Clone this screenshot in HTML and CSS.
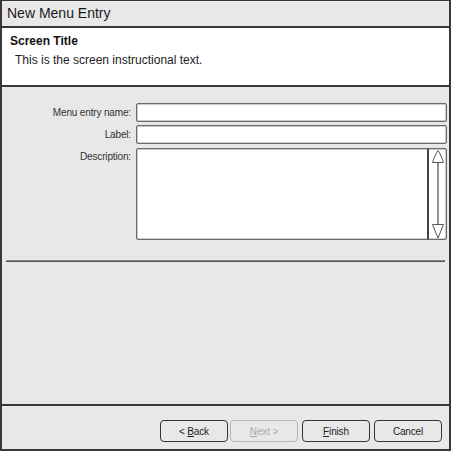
FILE: index.html
```html
<!DOCTYPE html>
<html>
<head>
<meta charset="utf-8">
<link rel="stylesheet" href="styles.css">
</head>
<body>
<div class="window">
  <div class="titlebar">New Menu Entry</div>
  <div class="header">
    <div class="screen-title">Screen Title</div>
    <div class="screen-text">This is the screen instructional text.</div>
  </div>
  <div class="content">
    <div class="form">
      <label class="lbl">Menu entry name:</label>
      <div class="field"></div>
      <label class="lbl">Label:</label>
      <div class="field"></div>
      <label class="lbl">Description:</label>
      <div class="field area">
        <div class="scroll">
          <svg width="16" height="90" viewBox="0 0 16 90">
            <path d="M8 1.5 C6 4 4 9 2.5 13.5 L13.5 13.5 C12 9 10 4 8 1.5 Z" fill="none" stroke="#555" stroke-width="1"/>
            <line x1="8" y1="13.5" x2="8" y2="75.5" stroke="#555" stroke-width="1.3"/>
            <path d="M2.5 75.5 L13.5 75.5 L8 89 Z" fill="none" stroke="#555" stroke-width="1"/>
          </svg>
        </div>
      </div>
    </div>
    <div class="separator"></div>
  </div>
  <div class="footer">
    <button class="btn"><span>&lt; <u>B</u>ack</span></button>
    <button class="btn disabled"><span><u>N</u>ext &gt;</span></button>
    <button class="btn gap"><span><u>F</u>inish</span></button>
    <button class="btn gap"><span>Cancel</span></button>
  </div>
</div>
</body>
</html>
```
FILE: styles.css
```css
html, body {
  margin: 0;
  padding: 0;
  background: #e8e8e8;
}
body {
  font-family: "Liberation Sans", Arial, sans-serif;
  color: #222;
}
.window {
  width: 451px;
  height: 451px;
  box-sizing: border-box;
  border-style: solid;
  border-color: #383838;
  border-width: 1px 2px 2px 2px;
  display: flex;
  flex-direction: column;
  background: #e8e8e8;
}
.titlebar {
  height: 25px;
  line-height: 25px;
  font-size: 14px;
  padding-left: 5px;
  border-bottom: 2px solid #383838;
  color: #1a1a1a;
}
.header {
  height: 57px;
  background: #fff;
  border-bottom: 2px solid #383838;
  padding-left: 8px;
  box-sizing: content-box;
}
.screen-title {
  font-size: 12px;
  font-weight: bold;
  line-height: 16px;
  padding-top: 5px;
  color: #111;
}
.screen-text {
  font-size: 12px;
  line-height: 16px;
  margin-top: 3px;
  padding-left: 5px;
  color: #222;
}
.content {
  flex: 1;
  padding-top: 16px;
}
.form {
  display: grid;
  grid-template-columns: 134px 1fr;
  row-gap: 3px;
  padding-right: 2px;
}
.lbl {
  font-size: 10px;
  line-height: 19px;
  text-align: right;
  padding-right: 5px;
  color: #333;
  letter-spacing: -0.15px;
}
.field {
  height: 19px;
  box-sizing: border-box;
  border: 1px solid #6a6a6a;
  border-radius: 2px;
  background: #fff;
  box-shadow: inset 0 0 0 0.5px #999;
}
.area {
  height: 92px;
  margin-top: 1px;
  display: flex;
  justify-content: flex-end;
}
.scroll {
  width: 17px;
  border-left: 2px solid #444;
  display: flex;
  justify-content: center;
}
.separator {
  margin: 20px 4px 0 4px;
  height: 2px;
  background: #555;
  border-top: 1px solid #888;
  box-sizing: border-box;
}
.footer {
  height: 45px;
  flex: none;
  border-top: 2px solid #383838;
  display: flex;
  justify-content: flex-end;
  align-items: flex-start;
  padding: 14px 7px 0 0;
  box-sizing: border-box;
}
.btn {
  width: 68px;
  height: 22px;
  margin: 0 0 0 2px;
  padding: 0;
  border: 1px solid #333;
  border-radius: 4px;
  background: #e8e8e8;
  font-family: "Liberation Sans", Arial, sans-serif;
  font-size: 10px;
  color: #222;
  letter-spacing: -0.15px;
}
.btn.gap {
  margin-left: 4px;
}
.btn.disabled {
  border-color: #b8b8b8;
  color: #a8a8a8;
}
```
